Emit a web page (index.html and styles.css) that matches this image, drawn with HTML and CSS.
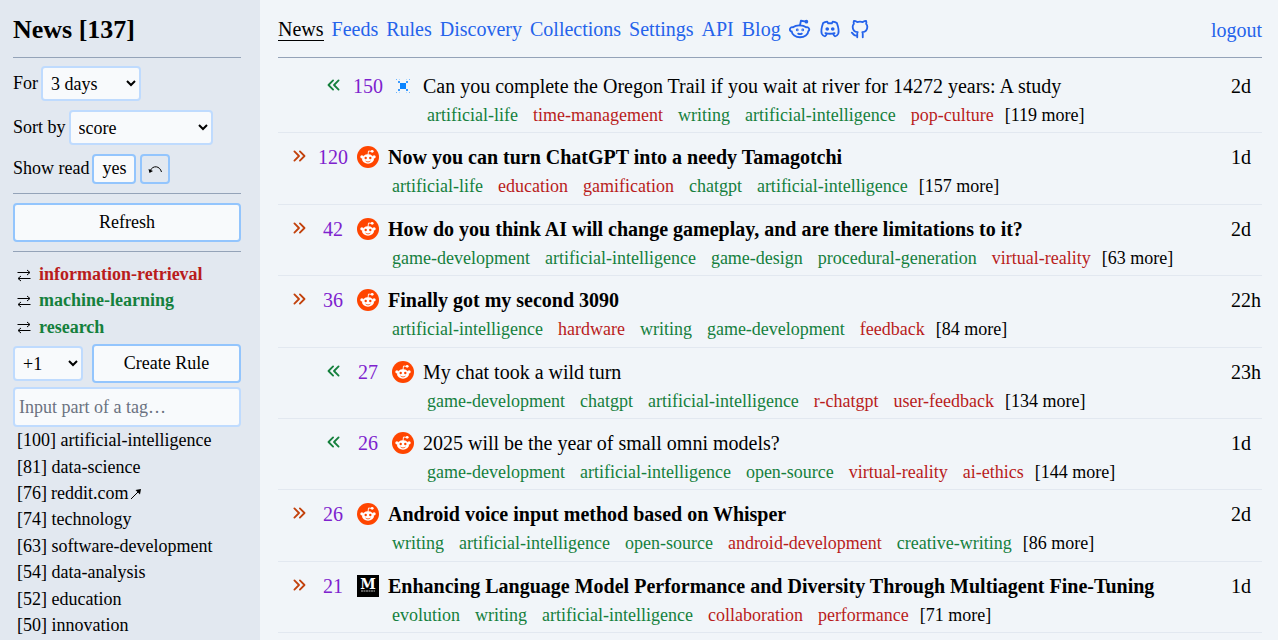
FILE: index.html
```
<!DOCTYPE html>
<html lang="en">
<head>
<meta charset="utf-8">
<title>News</title>
<link rel="stylesheet" href="styles.css">
</head>
<body>
<svg class="sprite" aria-hidden="true">
  <symbol id="chevrons-left" viewBox="0 0 24 24"><path d="M11 7l-5 5l5 5"/><path d="M17 7l-5 5l5 5"/></symbol>
  <symbol id="chevrons-right" viewBox="0 0 24 24"><path d="M7 7l5 5l-5 5"/><path d="M13 7l5 5l-5 5"/></symbol>
  <symbol id="swap" viewBox="0 0 14 14"><path d="M.5 4.5h12M10 2l3 2.500l-3 2.500M13.500 10.500h-12M4 8l-3 2.500l3 2.500"/></symbol>
  <symbol id="undo" viewBox="0 0 14 14"><path d="M13.500 10c-1.500 -6 -8.500 -7.500 -11.500 -1"/><path d="M.5 7l1 4l3.500 -2z" fill="currentColor" stroke="none"/></symbol>
  <symbol id="out" viewBox="0 0 14 14"><path d="M2 12l8.500 -8.500"/><path d="M6.500 3l5.500 -1l-1 5.500z" fill="currentColor" stroke="none"/></symbol>
  <symbol id="reddit-outline" viewBox="0 0 24 24">
    <path d="M12 8c2.648 0 5.028 .826 6.675 2.14a2.5 2.5 0 0 1 2.326 4.36c0 3.59 -4.03 6.5 -9 6.5c-4.875 0 -8.845 -2.8 -9 -6.294l-1 -.206a2.5 2.5 0 0 1 2.326 -4.36c1.646 -1.313 4.026 -2.14 6.674 -2.14z"/>
    <path d="M12 8l1 -5l6 1"/><circle cx="19" cy="4" r="1"/>
    <circle cx="9" cy="13" r=".5"/><circle cx="15" cy="13" r=".5"/>
    <path d="M10 17c.667 .333 1.333 .5 2 .5s1.333 -.167 2 -.5"/>
  </symbol>
  <symbol id="discord" viewBox="0 0 24 24">
    <circle cx="9" cy="12" r="1"/><circle cx="15" cy="12" r="1"/>
    <path d="M15.5 17c0 1 1.5 3 2 3c1.5 0 2.833 -1.667 3.5 -3c.667 -1.667 .5 -5.833 -1.5 -11.5c-1.457 -1.015 -3 -1.34 -4.5 -1.5l-.972 1.923a11.913 11.913 0 0 0 -4.053 0l-.975 -1.923c-1.5 .16 -3.043 .485 -4.5 1.5c-2 5.667 -2.167 9.833 -1.5 11.5c.667 1.333 2 3 3.5 3c.5 0 2 -2 2 -3"/>
    <path d="M7 16.5c3.5 1 6.5 1 10 0"/>
  </symbol>
  <symbol id="github" viewBox="0 0 24 24"><path d="M9 19c-4.3 1.4 -4.3 -2.5 -6 -3m12 5v-3.5c0 -1 .1 -1.4 -.5 -2c2.8 -.3 5.5 -1.4 5.5 -6a4.6 4.6 0 0 0 -1.3 -3.2a4.2 4.2 0 0 0 -.1 -3.2s-1.1 -.3 -3.5 1.3a12.3 12.3 0 0 0 -6.2 0c-2.4 -1.6 -3.5 -1.3 -3.5 -1.3a4.2 4.2 0 0 0 -.1 3.2a4.6 4.6 0 0 0 -1.3 3.2c0 4.6 2.7 5.7 5.5 6c-.6 .6 -.6 1.2 -.5 2v3.5"/></symbol>
  <symbol id="fav-reddit" viewBox="0 0 22 22">
    <circle cx="11" cy="11" r="11" fill="#ff4500"/>
    <ellipse cx="11" cy="13" rx="6" ry="4.7" fill="#fff"/>
    <circle cx="4.900" cy="10.800" r="1.600" fill="#fff"/><circle cx="17.100" cy="10.800" r="1.600" fill="#fff"/>
    <path d="M11 9l.5 -4l3.500 .4" fill="none" stroke="#fff" stroke-width=".9"/><circle cx="15.200" cy="5.300" r="1.400" fill="#fff"/>
    <circle cx="8.700" cy="12" r="1.200" fill="#ff4500"/><circle cx="13.300" cy="12" r="1.200" fill="#ff4500"/>
    <path d="M8.600 15c1.400 1.200 3.400 1.200 4.800 0" fill="none" stroke="#ff4500" stroke-width=".8"/>
  </symbol>
  <symbol id="fav-spark" viewBox="0 0 22 22">
    <rect x="8" y="8" width="6" height="6" fill="#0a84ff"/>
    <g fill="#3b9bff"><rect x="6" y="6" width="2" height="2"/><rect x="14" y="6" width="2" height="2"/><rect x="6" y="14" width="2" height="2"/><rect x="14" y="14" width="2" height="2"/></g>
    <g fill="#6db4fd"><rect x="4" y="4" width="1" height="1"/><rect x="17" y="4" width="1" height="1"/><rect x="4" y="17" width="1" height="1"/><rect x="17" y="17" width="1" height="1"/></g>
    <g fill="#b5d9fb"><rect x="7" y="4" width="1" height="1"/><rect x="14" y="4" width="1" height="1"/><rect x="7" y="17" width="1" height="1"/><rect x="14" y="17" width="1" height="1"/></g>
  </symbol>
</svg>

<div class="app">
  <aside class="sidebar">
    <h1 class="heading">News [137]</h1>
    <section class="filters">
      <div class="field"><label for="period">For</label><select id="period" class="select select-period"><option>3 days</option></select></div>
      <div class="field"><label for="sort">Sort by</label><select id="sort" class="select select-sort"><option>score</option></select></div>
      <div class="field"><label for="read">Show read</label><button id="read" class="button small">yes</button><button class="button small undo" aria-label="Undo"><svg class="glyph"><use href="#undo"/></svg></button></div>
    </section>
    <section class="refresh"><button class="button wide">Refresh</button></section>
    <section class="rules">
      <ul class="rule-tags">
        <li><a href="#" aria-label="Switch"><svg class="glyph"><use href="#swap"/></svg></a><a class="bad" href="#">information-retrieval</a></li>
        <li><a href="#" aria-label="Switch"><svg class="glyph"><use href="#swap"/></svg></a><a class="good" href="#">machine-learning</a></li>
        <li><a href="#" aria-label="Switch"><svg class="glyph"><use href="#swap"/></svg></a><a class="good" href="#">research</a></li>
      </ul>
      <div class="rule-form">
        <select class="select select-score" aria-label="Score"><option>+1</option></select>
        <button class="button wide">Create Rule</button>
      </div>
      <input class="tag-input" type="text" aria-label="Tag filter" placeholder="Input part of a tag…">
      <ul class="tag-list">
        <li>[100] <a href="#">artificial-intelligence</a></li>
        <li>[81] <a href="#">data-science</a></li>
        <li class="site">[76] <a href="#">reddit.com</a><a href="#" aria-label="Open site"><svg class="glyph"><use href="#out"/></svg></a></li>
        <li>[74] <a href="#">technology</a></li>
        <li>[63] <a href="#">software-development</a></li>
        <li>[54] <a href="#">data-analysis</a></li>
        <li>[52] <a href="#">education</a></li>
        <li>[50] <a href="#">innovation</a></li>
      </ul>
    </section>
  </aside>

  <main class="main">
    <header class="topbar">
      <nav class="nav">
        <a class="current" href="#">News</a><a href="#">Feeds</a><a href="#">Rules</a><a href="#">Discovery</a><a href="#">Collections</a><a href="#">Settings</a><a href="#">API</a><a href="#">Blog</a>
        <a href="#" aria-label="Reddit"><svg class="icon"><use href="#reddit-outline"/></svg></a>
        <a href="#" aria-label="Discord"><svg class="icon"><use href="#discord"/></svg></a>
        <a href="#" aria-label="GitHub"><svg class="icon"><use href="#github"/></svg></a>
      </nav>
      <a class="logout" href="#">logout</a>
    </header>

    <ul class="entries">
      <li class="entry read">
        <button class="mark" aria-label="Mark unread"><svg class="icon"><use href="#chevrons-left"/></svg></button>
        <span class="score">150</span><svg class="favicon"><use href="#fav-spark"/></svg>
        <div class="body"><a class="title" href="#">Can you complete the Oregon Trail if you wait at river for 14272 years: A study</a>
          <div class="tags"><a class="good" href="#">artificial-life</a><a class="bad" href="#">time-management</a><a class="good" href="#">writing</a><a class="good" href="#">artificial-intelligence</a><a class="bad" href="#">pop-culture</a><a class="more" href="#">[119 more]</a></div></div>
        <time class="age">2d</time>
      </li>
      <li class="entry">
        <button class="mark" aria-label="Mark read"><svg class="icon"><use href="#chevrons-right"/></svg></button>
        <span class="score">120</span><svg class="favicon"><use href="#fav-reddit"/></svg>
        <div class="body"><a class="title" href="#">Now you can turn ChatGPT into a needy Tamagotchi</a>
          <div class="tags"><a class="good" href="#">artificial-life</a><a class="bad" href="#">education</a><a class="bad" href="#">gamification</a><a class="good" href="#">chatgpt</a><a class="good" href="#">artificial-intelligence</a><a class="more" href="#">[157 more]</a></div></div>
        <time class="age">1d</time>
      </li>
      <li class="entry">
        <button class="mark" aria-label="Mark read"><svg class="icon"><use href="#chevrons-right"/></svg></button>
        <span class="score">42</span><svg class="favicon"><use href="#fav-reddit"/></svg>
        <div class="body"><a class="title" href="#">How do you think AI will change gameplay, and are there limitations to it?</a>
          <div class="tags"><a class="good" href="#">game-development</a><a class="good" href="#">artificial-intelligence</a><a class="good" href="#">game-design</a><a class="good" href="#">procedural-generation</a><a class="bad" href="#">virtual-reality</a><a class="more" href="#">[63 more]</a></div></div>
        <time class="age">2d</time>
      </li>
      <li class="entry">
        <button class="mark" aria-label="Mark read"><svg class="icon"><use href="#chevrons-right"/></svg></button>
        <span class="score">36</span><svg class="favicon"><use href="#fav-reddit"/></svg>
        <div class="body"><a class="title" href="#">Finally got my second 3090</a>
          <div class="tags"><a class="good" href="#">artificial-intelligence</a><a class="bad" href="#">hardware</a><a class="good" href="#">writing</a><a class="good" href="#">game-development</a><a class="bad" href="#">feedback</a><a class="more" href="#">[84 more]</a></div></div>
        <time class="age">22h</time>
      </li>
      <li class="entry read">
        <button class="mark" aria-label="Mark unread"><svg class="icon"><use href="#chevrons-left"/></svg></button>
        <span class="score">27</span><svg class="favicon"><use href="#fav-reddit"/></svg>
        <div class="body"><a class="title" href="#">My chat took a wild turn</a>
          <div class="tags"><a class="good" href="#">game-development</a><a class="good" href="#">chatgpt</a><a class="good" href="#">artificial-intelligence</a><a class="bad" href="#">r-chatgpt</a><a class="bad" href="#">user-feedback</a><a class="more" href="#">[134 more]</a></div></div>
        <time class="age">23h</time>
      </li>
      <li class="entry read">
        <button class="mark" aria-label="Mark unread"><svg class="icon"><use href="#chevrons-left"/></svg></button>
        <span class="score">26</span><svg class="favicon"><use href="#fav-reddit"/></svg>
        <div class="body"><a class="title" href="#">2025 will be the year of small omni models?</a>
          <div class="tags"><a class="good" href="#">game-development</a><a class="good" href="#">artificial-intelligence</a><a class="good" href="#">open-source</a><a class="bad" href="#">virtual-reality</a><a class="bad" href="#">ai-ethics</a><a class="more" href="#">[144 more]</a></div></div>
        <time class="age">1d</time>
      </li>
      <li class="entry">
        <button class="mark" aria-label="Mark read"><svg class="icon"><use href="#chevrons-right"/></svg></button>
        <span class="score">26</span><svg class="favicon"><use href="#fav-reddit"/></svg>
        <div class="body"><a class="title" href="#">Android voice input method based on Whisper</a>
          <div class="tags"><a class="good" href="#">writing</a><a class="good" href="#">artificial-intelligence</a><a class="good" href="#">open-source</a><a class="bad" href="#">android-development</a><a class="good" href="#">creative-writing</a><a class="more" href="#">[86 more]</a></div></div>
        <time class="age">2d</time>
      </li>
      <li class="entry">
        <button class="mark" aria-label="Mark read"><svg class="icon"><use href="#chevrons-right"/></svg></button>
        <span class="score">21</span>
        <svg class="favicon" viewBox="0 0 22 22">
          <rect width="22" height="22"/>
          <text class="fav-letter" x="11" y="14" text-anchor="middle">M</text>
          <path d="M4 16h14" stroke="#bbb" stroke-dasharray="2 .5"/>
        </svg>
        <div class="body"><a class="title" href="#">Enhancing Language Model Performance and Diversity Through Multiagent Fine-Tuning</a>
          <div class="tags"><a class="good" href="#">evolution</a><a class="good" href="#">writing</a><a class="good" href="#">artificial-intelligence</a><a class="bad" href="#">collaboration</a><a class="bad" href="#">performance</a><a class="more" href="#">[71 more]</a></div></div>
        <time class="age">1d</time>
      </li>
    </ul>
  </main>
</div>
</body>
</html>
```
FILE: styles.css
```
* { box-sizing: border-box; }
body {
  margin: 0;
  font-family: "Liberation Serif", serif;
  font-size: 18px;
  line-height: 1.3;
  color: #000;
  background: #f1f5f9;
}
ul { list-style: none; margin: 0; padding: 0; }
a { color: inherit; text-decoration: none; }
button, select, input { font: inherit; color: inherit; margin: 0; }
.sprite { position: absolute; width: 0; height: 0; }
.icon { display: block; width: 22px; height: 22px; fill: none; stroke: currentColor; stroke-width: 2; stroke-linecap: round; stroke-linejoin: round; }
.glyph { display: block; width: 14px; height: 14px; fill: none; stroke: currentColor; stroke-width: 1; }

.app { display: flex; min-height: 100vh; }

.sidebar { flex: 0 0 260px; padding: 0 19px 0 13px; background: #e2e8f0; }
.heading { margin: 0; padding: 3px 0 0; font-size: 26px; line-height: 54px; }
.filters, .refresh, .rules { border-top: 1px solid #94a3b8; padding: 9px 0; }
.filters { display: flex; flex-direction: column; gap: 9px; padding-top: 8px; }
.field { display: flex; align-items: center; gap: 3px; }
.select { height: 35px; padding: 0 4px; background: #f8fafc; border: 2px solid #bfdbfe; border-radius: 4px; }
.select-period { width: 100px; }
.select-sort { width: 144px; }
.select-score { flex: 0 0 70px; }
.button { background: #f8fafc; border: 2px solid #93c5fd; border-radius: 4px; }
.small { height: 30px; padding: 0 8px; }
.undo { margin-left: 1px; background: #e2e8f0; }
.small.undo { padding: 0 6px; }
.wide { width: 100%; height: 39px; }
.rules { padding-top: 9px; }
.rule-tags { display: flex; flex-direction: column; gap: 3px; padding: 2px 4px 5px; }
.rule-tags li { display: flex; align-items: center; gap: 8px; }
.rule-tags .good, .rule-tags .bad { font-weight: bold; }
.rule-form { display: flex; align-items: center; gap: 9px; margin-bottom: 4px; }
.tag-input { display: block; width: 100%; height: 40px; padding: 0 4px; background: #f8fafc; border: 2px solid #bfdbfe; border-radius: 4px; }
.tag-input::placeholder { color: #6b7280; }
.tag-list { display: flex; flex-direction: column; gap: 3px; padding: 2px 4px 0; }
.site { display: flex; align-items: center; gap: 4px; }
.site .glyph { margin-left: -3px; }

.good { color: #15803d; }
.bad { color: #b91c1c; }

.main { flex: 1; min-width: 0; padding: 0 16px 0 18px; }
.topbar { display: flex; justify-content: space-between; align-items: center; height: 58px; padding-top: 3px; border-bottom: 1px solid #94a3b8; font-size: 20px; line-height: 20px; color: #2563eb; }
.nav { display: flex; align-items: center; gap: 8px; padding-bottom: 2px; }
.current { margin-bottom: -2px; padding-bottom: 1px; color: #000; border-bottom: 1px solid #000; }

.entries { padding-top: 4px; }
.entry { display: flex; align-items: flex-start; padding: 9px 0 5px; border-bottom: 1px solid #e2e8f0; font-size: 20px; line-height: 30px; }
.read { padding-left: 35px; }
.mark { width: 35px; height: 28px; padding: 0 0 0 10px; border: 0; background: none; color: #c2410c; }
.read .mark { color: #15803d; }
.score { width: 40px; text-align: center; color: #7e22ce; }
.favicon { width: 22px; height: 22px; margin: 4px 9px 0 4px; }
.fav-letter { font: bold 14px "DejaVu Serif", serif; fill: #fff; }
.body { flex: 1; min-width: 0; }
.title { display: block; font-weight: bold; }
.read .title { font-weight: normal; }
.tags { display: flex; flex-wrap: wrap; margin-top: 3px; padding-left: 4px; gap: 0 15px; font-size: 18px; line-height: 1.3; }
.more { margin-left: -4px; }
.age { width: 31px; }
```
